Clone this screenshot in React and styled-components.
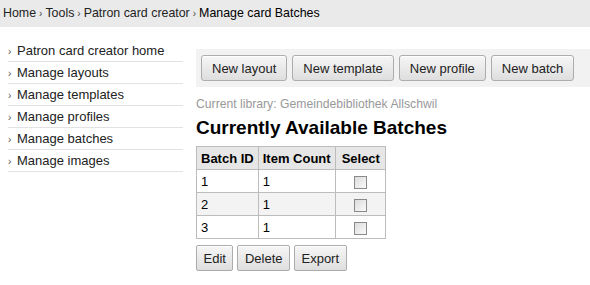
import styled, { createGlobalStyle } from "styled-components";

const GlobalStyle = createGlobalStyle`
  html, body {
    margin: 0;
    padding: 0;
    background: #fff;
    font-family: "Liberation Sans", Arial, sans-serif;
    font-size: 13px;
    color: #000;
  }
`;

const Breadcrumbs = styled.div`
  background: #eaeaea;
  height: 27px;
  line-height: 27px;
  padding-left: 3px;
  font-size: 12.4px;
  color: #222;
  white-space: nowrap;
`;

const Sep = styled.span`
  font-size: 10px;
  color: #444;
  margin: 0 3px;
`;

const Current = styled.span`
  color: #000;
`;

const Main = styled.div`
  display: flex;
  padding: 13px 0 0 8px;
  gap: 13px;
`;

const SideNav = styled.ul`
  list-style: none;
  margin: 0;
  padding: 0;
  width: 175px;
  flex-shrink: 0;
`;

const NavItem = styled.li`
  display: flex;
  align-items: center;
  height: 21px;
  border-bottom: 1px solid #e2e2e2;
  color: #222;
  font-size: 13px;
  &::before {
    content: "›";
    font-size: 10px;
    color: #555;
    width: 9px;
    margin-top: 2px;
  }
`;

const Content = styled.div`
  flex: 1;
  display: flex;
  flex-direction: column;
  align-items: flex-start;
  padding-top: 9px;
`;

const Toolbar = styled.div`
  align-self: stretch;
  display: flex;
  gap: 5px;
  background: #f2f2f2;
  padding: 6px 5px;
`;

const Button = styled.button`
  font-family: "Liberation Sans", Arial, sans-serif;
  font-size: 13px;
  color: #222;
  height: 26px;
  padding: 0 ${(p) => (p.$small ? "6.5px" : "10px")};
  border: 1px solid #acacac;
  border-radius: ${(p) => (p.$small ? "2px" : "3px")};
  background: linear-gradient(#f6f6f6, #dedede);
  box-shadow: inset 0 1px 0 #fff;
  cursor: pointer;
`;

const Library = styled.div`
  margin-top: 10px;
  font-size: 12.2px;
  color: #999;
`;

const Heading = styled.h1`
  margin: 6px 0 7px;
  font-size: 19px;
  line-height: 22px;
  font-weight: bold;
  color: #000;
`;

const Table = styled.table`
  border-collapse: collapse;
  font-size: 13px;
  border: 1px solid #bcbcbc;
  th, td {
    border: 1px solid #bcbcbc;
    height: 22px;
    padding: 0 4px;
    text-align: left;
  }
  th {
    background: #e6e6e6;
    font-weight: bold;
  }
  th:last-child {
    padding: 0 5px 0 6px;
  }
  tr:nth-child(even) td {
    background: #f3f3f3;
  }
`;

const CheckCell = styled.td`
  && {
    text-align: center;
  }
`;

const Check = styled.span`
  display: inline-block;
  width: 11px;
  height: 11px;
  border: 1px solid #8a8a8a;
  background: linear-gradient(135deg, #dcdcdc, #fafafa);
  vertical-align: middle;
`;

const Actions = styled.div`
  display: flex;
  gap: 4px;
  margin-top: 6px;
`;

const nav = [
  "Patron card creator home",
  "Manage layouts",
  "Manage templates",
  "Manage profiles",
  "Manage batches",
  "Manage images",
];

const batches = [
  { id: 1, count: 1 },
  { id: 2, count: 1 },
  { id: 3, count: 1 },
];

export default function App() {
  return (
    <>
      <GlobalStyle />
      <Breadcrumbs>
        Home<Sep>›</Sep>Tools<Sep>›</Sep>Patron card creator<Sep>›</Sep>
        <Current>Manage card Batches</Current>
      </Breadcrumbs>
      <Main>
        <SideNav>
          {nav.map((n) => (
            <NavItem key={n}>{n}</NavItem>
          ))}
        </SideNav>
        <Content>
          <Toolbar>
            <Button>New layout</Button>
            <Button>New template</Button>
            <Button>New profile</Button>
            <Button>New batch</Button>
          </Toolbar>
          <Library>Current library: Gemeindebibliothek Allschwil</Library>
          <Heading>Currently Available Batches</Heading>
          <Table>
            <thead>
              <tr>
                <th>Batch ID</th>
                <th>Item Count</th>
                <th>Select</th>
              </tr>
            </thead>
            <tbody>
              {batches.map((b) => (
                <tr key={b.id}>
                  <td>{b.id}</td>
                  <td>{b.count}</td>
                  <CheckCell>
                    <Check />
                  </CheckCell>
                </tr>
              ))}
            </tbody>
          </Table>
          <Actions>
            <Button $small>Edit</Button>
            <Button $small>Delete</Button>
            <Button $small>Export</Button>
          </Actions>
        </Content>
      </Main>
    </>
  );
}
